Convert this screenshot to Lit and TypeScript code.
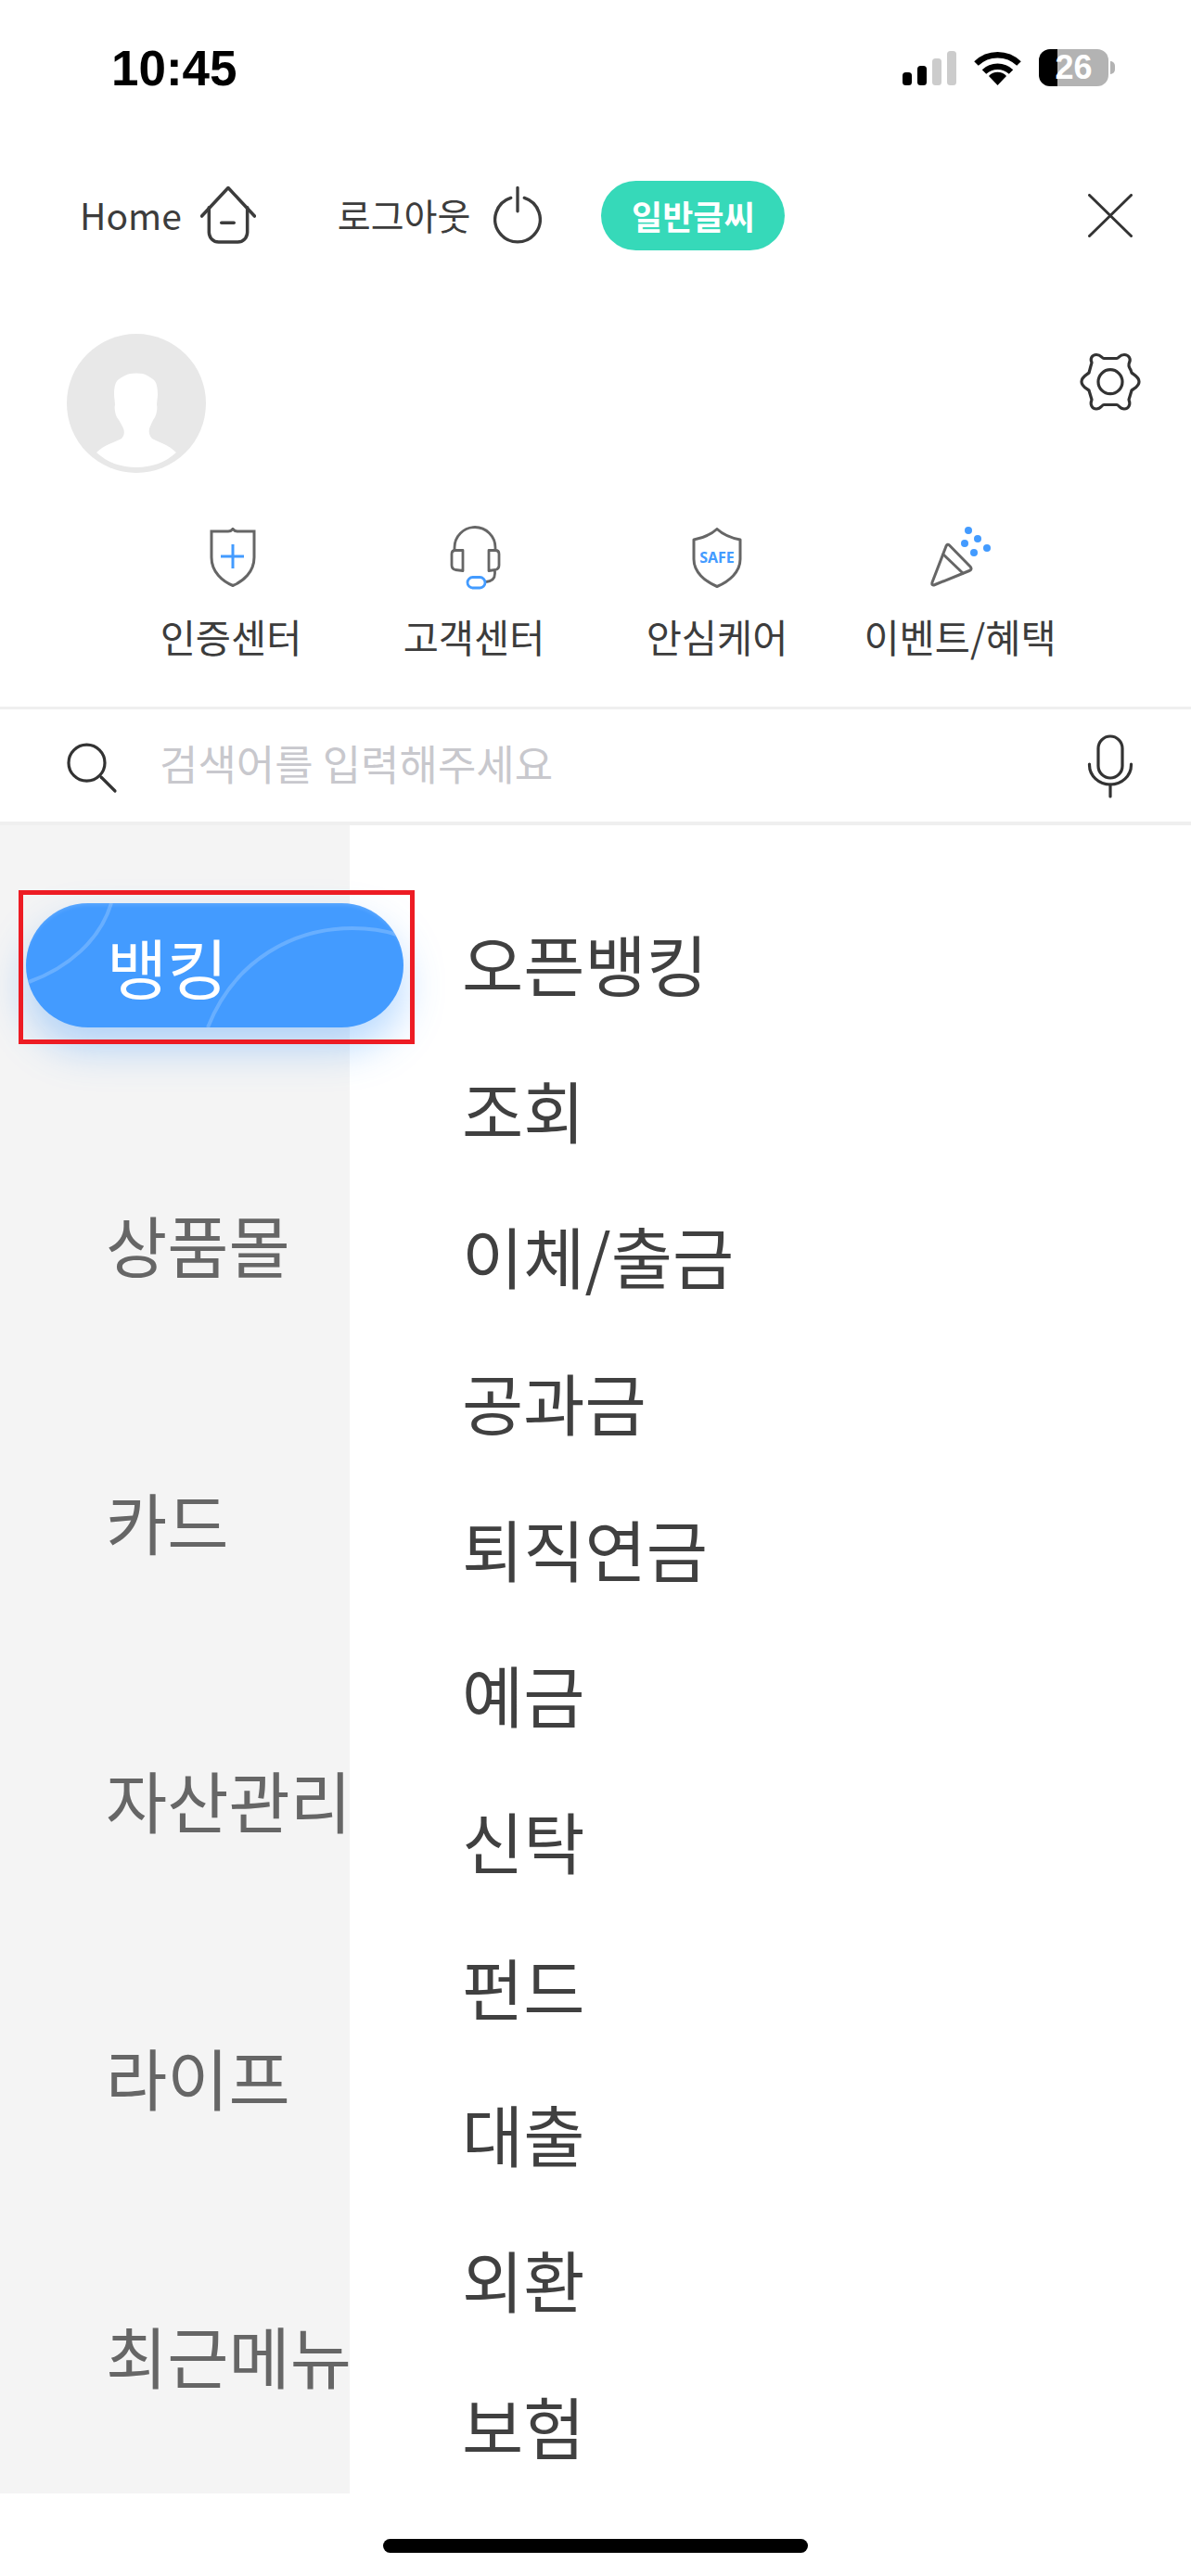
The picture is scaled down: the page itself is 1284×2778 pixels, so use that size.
import { LitElement, html, css, svg } from 'lit';
import { customElement } from 'lit/decorators.js';

const QUICK_ICONS = {
  cert: svg`<svg width="54" height="64" viewBox="-4 0 54 64" fill="none">
    <path d="M2 4H20Q23 4 25 1.5Q27 4 30 4H48V32C48 48 36 58 25 62.5C14 58 2 48 2 32Z" stroke="#666" stroke-width="3"/>
    <path d="M12 31H37M25 18V44" stroke="#439bff" stroke-width="3"/>
  </svg>`,
  headset: svg`<svg width="90" height="85" viewBox="-5 -1.5 90 85" fill="none" stroke-width="2.8" stroke-linejoin="round">
    <path d="M19 33V30A22 22 0 0 1 63 30V33" stroke="#666"/>
    <path d="M28 33H20Q16 33 16 37V49Q16 53 20 54L28 55Z" stroke="#666"/>
    <path d="M56 33H63Q67 33 67 37V49Q67 53 63 54L56 55Z" stroke="#666"/>
    <path d="M62.5 55V58Q62.5 66 53 67" stroke="#666"/>
    <rect x="33" y="62" width="19" height="11.5" rx="5.7" stroke="#439bff"/>
  </svg>`,
  safe: svg`<svg width="54" height="65" viewBox="0 0 54 65" fill="none">
    <path d="M27 1.5C33 7 41 11 52 13V34C52 48 40 58 27 63.5C14 58 2 48 2 34V13C13 11 21 7 27 1.5Z" stroke="#666" stroke-width="3" stroke-linejoin="round"/>
    <text x="27" y="38" text-anchor="middle" font-size="16" font-weight="700" font-family="'Noto Sans', sans-serif" fill="#439bff">SAFE</text>
  </svg>`,
  event: svg`<svg width="66" height="66" viewBox="0 0 66 66" fill="none">
    <path d="M3 60L18 21Q19.5 18 21.5 20L44 43Q46.5 46 43 47.5L6 62.5Q2 64 3 60Z" stroke="#666" stroke-width="3" stroke-linejoin="round"/>
    <path d="M14 29L37 51" stroke="#666" stroke-width="3"/>
    <g fill="#439bff">
      <circle cx="42" cy="4" r="4"/><circle cx="52" cy="13" r="4"/><circle cx="38" cy="18" r="4"/>
      <circle cx="62" cy="23" r="4"/><circle cx="48" cy="28" r="4"/>
    </g>
  </svg>`,
};

const QUICK = [
  { icon: QUICK_ICONS.cert, label: '인증센터' },
  { icon: QUICK_ICONS.headset, label: '고객센터' },
  { icon: QUICK_ICONS.safe, label: '안심케어' },
  { icon: QUICK_ICONS.event, label: '이벤트/혜택' },
];

const CATEGORIES = ['뱅킹', '상품몰', '카드', '자산관리', '라이프', '최근메뉴'];
const SUBMENU = ['오픈뱅킹', '조회', '이체/출금', '공과금', '퇴직연금', '예금', '신탁', '펀드', '대출', '외환', '보험'];

@customElement('app-root')
export class AppRoot extends LitElement {
  static styles = css`
    :host {
      display: block;
      width: 1284px;
      height: 2778px;
      overflow: hidden;
      background: #fff;
      color: #3c3c3c;
      font-family: 'Noto Sans CJK KR', 'Noto Sans', sans-serif;
    }
    svg { display: block; flex: none; }

    .status {
      height: 146px;
      display: flex;
      align-items: center;
      padding: 0 82px 0 120px;
    }
    .time {
      font: 700 53px/1 'Liberation Sans', sans-serif;
      color: #000;
    }
    .status-icons {
      margin-left: auto;
      display: flex;
      align-items: center;
      gap: 19px;
    }
    .battery {
      display: flex;
      align-items: center;
      gap: 2px;
    }
    .battery-body {
      width: 75px;
      height: 40px;
      border-radius: 12px;
      background: linear-gradient(to right, #000 27%, #b3b3b3 27%);
      color: #fff;
      font: 700 36px/40px 'Liberation Sans', sans-serif;
      text-align: center;
    }
    .battery-nub {
      width: 5px;
      height: 14px;
      border-radius: 0 7px 7px 0;
      background: #b3b3b3;
    }

    .toolbar {
      height: 172px;
      display: flex;
      align-items: center;
      padding: 0 63px 0 86px;
      font-size: 39px;
    }
    .tool { display: flex; align-items: center; }
    .tool span { line-height: 60px; margin-bottom: 3px; }
    .home { gap: 20px; }
    .logout { gap: 25px; margin-left: 88px; }
    .font-size {
      margin-left: 64px;
      width: 198px;
      height: 75px;
      border-radius: 38px;
      background: #36d9b9;
      color: #fff;
      font-size: 36px;
      font-weight: 700;
      line-height: 75px;
      text-align: center;
    }
    .close { margin-left: auto; }

    .profile {
      display: flex;
      justify-content: space-between;
      align-items: flex-start;
      padding: 42px 44px 0 72px;
    }
    .profile .gear { margin-top: 10px; }

    .quick {
      display: grid;
      grid-template-columns: repeat(4, 262px);
      padding: 57px 0 46px 118px;
    }
    .quick-item {
      display: flex;
      flex-direction: column;
      align-items: center;
    }
    .quick-icon {
      height: 68px;
      display: flex;
      align-items: center;
      justify-content: center;
    }
    .quick-label {
      margin-top: 21px;
      font-size: 41.5px;
      line-height: 60px;
      white-space: nowrap;
    }

    .search {
      height: 121px;
      display: flex;
      align-items: center;
      padding: 0 44px 0 60px;
      border-top: 3px solid #efefef;
      border-bottom: 4px solid #efefef;
    }
    .placeholder {
      margin: 0 0 6px 22px;
      font-size: 45px;
      color: #c8c8cd;
      white-space: nowrap;
    }
    .search .mic { margin-left: auto; }

    .menu {
      height: 1799px;
      display: grid;
      grid-template-columns: 377px 1fr;
    }
    .categories {
      position: relative;
      z-index: 1;
      background: #f4f4f4;
      padding-top: 84px;
      display: flex;
      flex-direction: column;
      gap: 165.5px;
    }
    .category {
      position: relative;
      height: 134px;
      box-sizing: border-box;
      padding-left: 114px;
      font-size: 72px;
      line-height: 134px;
      color: #666;
      white-space: nowrap;
    }
    .category.active {
      width: 407px;
      margin-left: 28px;
      padding-left: 87px;
      border-radius: 67px;
      background: #439bff;
      color: #fff;
      font-size: 71px;
      box-shadow: 0 22px 44px rgba(67, 155, 255, 0.38), inset 0 4px 4px -2px rgba(255, 255, 255, 0.14);
    }
    .category.active span { position: relative; }
    .arcs {
      position: absolute;
      inset: 0;
      border-radius: 67px;
    }
    .highlight {
      position: absolute;
      left: -8px;
      top: -14px;
      width: 427px;
      height: 166px;
      box-sizing: border-box;
      border: 5px solid #ed1c24;
    }

    .submenu {
      padding: 69px 0 0 121px;
      overflow: hidden;
    }
    .submenu div {
      height: 157.7px;
      line-height: 157.7px;
      font-size: 72px;
      color: #404040;
    }

    .bottom {
      display: flex;
      justify-content: center;
      padding-top: 49px;
    }
    .home-bar {
      width: 458px;
      height: 15px;
      border-radius: 8px;
      background: #000;
    }
  `;

  renderStatus() {
    return html`
      <div class="status">
        <div class="time">10:45</div>
        <div class="status-icons">
          <svg width="58" height="37" viewBox="0 0 58 37">
            <rect x="0" y="23" width="10" height="14" rx="3.5" fill="#000"/>
            <rect x="16" y="16" width="10" height="21" rx="3.5" fill="#000"/>
            <rect x="32" y="8" width="10" height="29" rx="3.5" fill="#ccc"/>
            <rect x="48" y="0" width="10" height="37" rx="3.5" fill="#ccc"/>
          </svg>
          <svg width="51" height="38" viewBox="0 0 51 38" fill="none" stroke="#000" stroke-width="6.5">
            <path d="M2.5 14.5A33 33 0 0 1 48.5 14.5"/>
            <path d="M11 23.5A21 21 0 0 1 40 23.5"/>
            <path d="M25.5 38L16 28A13 13 0 0 1 35 28Z" fill="#000" stroke="none"/>
          </svg>
          <div class="battery">
            <div class="battery-body">26</div>
            <div class="battery-nub"></div>
          </div>
        </div>
      </div>
    `;
  }

  renderToolbar() {
    return html`
      <div class="toolbar">
        <div class="tool home">
          <span>Home</span>
          <svg width="60" height="62" viewBox="0 0 58 60" fill="none" stroke="#3c3c3c" stroke-width="3.4" stroke-linecap="round" stroke-linejoin="round">
            <path d="M1.5 31L29 1.5L56.5 31"/>
            <path d="M9 22V48A10 10 0 0 0 19 58H39A10 10 0 0 0 49 48V22"/>
            <path d="M22 38H35"/>
          </svg>
        </div>
        <div class="tool logout">
          <span>로그아웃</span>
          <svg width="52" height="62" viewBox="0 0 50 60" fill="none" stroke="#3c3c3c" stroke-width="3.2" stroke-linecap="round">
            <path d="M18 12A23.5 23.5 0 1 0 32 12"/>
            <path d="M25 1.5V26"/>
          </svg>
        </div>
        <div class="font-size">일반글씨</div>
        <svg class="close" width="48" height="47" viewBox="0 0 48 47" fill="none" stroke="#333" stroke-width="3" stroke-linecap="round">
          <path d="M1.5 1.5L46.5 45.5M46.5 1.5L1.5 45.5"/>
        </svg>
      </div>
    `;
  }

  renderProfile() {
    return html`
      <div class="profile">
        <svg width="150" height="150" viewBox="0 0 150 150">
          <circle cx="75" cy="75" r="75" fill="#e8e8e8"/>
          <path fill="#fff" d="M75 42.5C86 42.5 88 46 93 49C97 52 98 58 98 66L97 76C98 80 97 86 95 90C92 94 91 98 89 102C88 106 89 110 92 113C100 117 110 120 118 128C106 139 91 144 75 144C59 144 44 139 32 128C40 120 51 117 59 113C62 110 62.5 106 61 102C59 98 57 94 54 90C52 86 51 80 52 76L51 66C51 58 52 52 56 49C61 46 64 42.5 75 42.5Z"/>
        </svg>
        <svg class="gear" width="90" height="80" viewBox="0 0 90 80" fill="none" stroke="#333" stroke-width="3.2" stroke-linejoin="round">
          <path d="M40 16.5H54C56 16.5 57 12.5 62 12.5C67 12.5 69.5 17 67.5 21C66 24 67 26 69 29L70 32C72 34 78 36 78 41.7C78 47 72 49 70 51L67 61C69 66 67 71 62 71C57 71 56 66.5 54 66.5H40C38 66.5 37 71 32 71C27 71 25 66 27 61L24 51C22 49 16 47 16 41.7C16 36 22 34 24 32L27 21C25 17 27 12.5 32 12.5C37 12.5 38 16.5 40 16.5Z"/>
          <circle cx="47" cy="41.7" r="13"/>
        </svg>
      </div>
      <div class="quick">
        ${QUICK.map(
          (q) => html`
            <div class="quick-item">
              <div class="quick-icon">${q.icon}</div>
              <div class="quick-label">${q.label}</div>
            </div>
          `
        )}
      </div>
    `;
  }

  renderSearch() {
    return html`
      <div class="search">
        <svg width="90" height="90" viewBox="0 0 90 90" fill="none" stroke="#333" stroke-width="3.2" stroke-linecap="round">
          <circle cx="33.5" cy="41.7" r="19.5"/>
          <path d="M49 57L64 72"/>
        </svg>
        <div class="placeholder">검색어를 입력해주세요</div>
        <svg class="mic" width="90" height="90" viewBox="0 0 90 90" fill="none" stroke="#333" stroke-width="3.2" stroke-linecap="round">
          <rect x="34" y="13" width="26" height="45" rx="13"/>
          <path d="M24.5 43V44A22.5 21 0 0 0 69.5 44V43"/>
          <path d="M47 65V78"/>
        </svg>
      </div>
    `;
  }

  renderMenu() {
    return html`
      <div class="menu">
        <div class="categories">
          ${CATEGORIES.map((name, i) =>
            i === 0
              ? html`
                  <div class="category active">
                    <svg class="arcs" width="407" height="134" viewBox="0 0 407 134" fill="none" stroke="rgba(255,255,255,0.2)" stroke-width="4">
                      <path d="M92 0C80 40 45 70 3 85"/>
                      <path d="M196 134C225 60 290 27 352 27C370 27 385 29 400 34"/>
                    </svg>
                    <span>${name}</span>
                    <div class="highlight"></div>
                  </div>
                `
              : html`<div class="category">${name}</div>`
          )}
        </div>
        <div class="submenu">
          ${SUBMENU.map((name) => html`<div>${name}</div>`)}
        </div>
      </div>
    `;
  }

  render() {
    return html`
      ${this.renderStatus()}
      ${this.renderToolbar()}
      ${this.renderProfile()}
      ${this.renderSearch()}
      ${this.renderMenu()}
      <div class="bottom"><div class="home-bar"></div></div>
    `;
  }
}
